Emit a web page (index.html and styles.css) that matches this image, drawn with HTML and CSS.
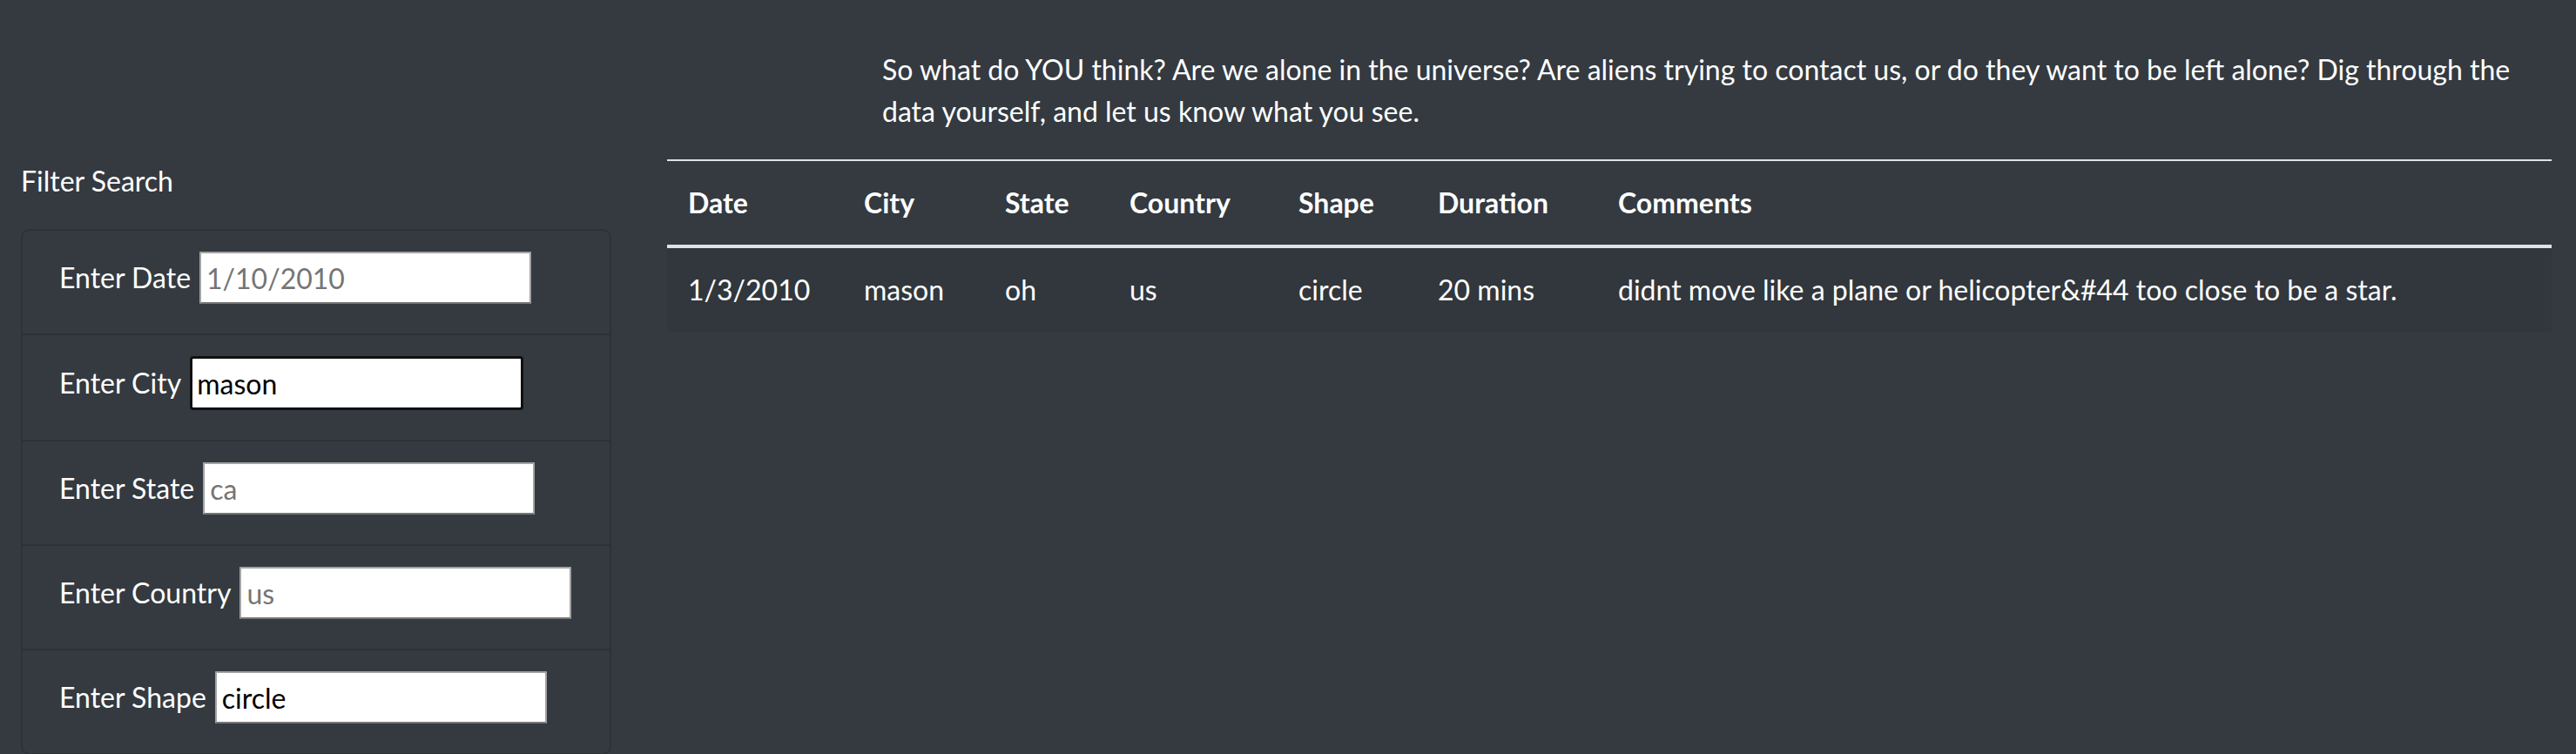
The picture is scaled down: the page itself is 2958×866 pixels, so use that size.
FILE: index.html
```html
<!DOCTYPE html>
<html lang="en">
<head>
<meta charset="utf-8">
<title>UFO Sightings</title>
<link rel="stylesheet" href="styles.css">
</head>
<body>
  <div class="intro">
    <p class="intro-text">So what do YOU think? Are we alone in the universe? Are aliens trying to contact us, or do they want to be left alone? Dig through the data yourself, and let us know what you see.</p>
  </div>
  <div class="main">
    <aside class="filters">
      <h5 class="filter-title">Filter Search</h5>
      <ul class="filter-card">
        <li class="filter-item"><label class="filter-label" for="datetime">Enter Date</label><input class="filter-input" id="datetime" type="text" placeholder="1/10/2010"></li>
        <li class="filter-item"><label class="filter-label" for="city">Enter City</label><input class="filter-input is-focused" id="city" type="text" value="mason"></li>
        <li class="filter-item"><label class="filter-label" for="state">Enter State</label><input class="filter-input" id="state" type="text" placeholder="ca"></li>
        <li class="filter-item"><label class="filter-label" for="country">Enter Country</label><input class="filter-input" id="country" type="text" placeholder="us"></li>
        <li class="filter-item"><label class="filter-label" for="shape">Enter Shape</label><input class="filter-input" id="shape" type="text" value="circle"></li>
      </ul>
    </aside>
    <section class="results">
      <table class="ufo-table">
        <colgroup>
          <col class="col-date"><col class="col-city"><col class="col-state"><col class="col-country"><col class="col-shape"><col class="col-duration"><col class="col-comments">
        </colgroup>
        <thead>
          <tr>
            <th>Date</th><th>City</th><th>State</th><th>Country</th><th>Shape</th><th>Duration</th><th>Comments</th>
          </tr>
        </thead>
        <tbody>
          <tr class="striped">
            <td>1/3/2010</td><td>mason</td><td>oh</td><td>us</td><td>circle</td><td>20 mins</td><td>didnt move like a plane or helicopter&amp;#44 too close to be a star.</td>
          </tr>
        </tbody>
      </table>
    </section>
  </div>
</body>
</html>
```
FILE: styles.css
```css
html, body {
  margin: 0;
  padding: 0;
}

body {
  background: #343a40;
  color: #ffffff;
  font-family: Lato, "Open Sans", "Liberation Sans", sans-serif;
  font-size: 32px;
  line-height: 48px;
  height: 866px;
  overflow: hidden;
}

.intro {
  padding: 56px 28px 0 1013px;
}

.intro-text {
  margin: 0 0 31px 0;
}

.main {
  display: grid;
  grid-template-columns: 740px 1fr;
}

.filters {
  padding: 0 38px 0 24px;
}

.filter-title {
  margin: 1px 0 31px 0;
  font-size: 32px;
  font-weight: 400;
  line-height: 48px;
}

.filter-card {
  list-style: none;
  margin: 0;
  padding: 0;
  border: 2px solid #2d3237;
  border-radius: 10px;
}

.filter-item {
  display: flex;
  align-items: center;
  gap: 10px;
  padding: 24px 42px 34px 42px;
  border-bottom: 2px solid #2d3237;
}

.filter-item:last-child {
  border-bottom: none;
}

.filter-label {
  white-space: nowrap;
}

.filter-input {
  box-sizing: border-box;
  width: 381px;
  height: 60px;
  padding: 0 6px;
  margin: 0;
  border: 2px solid #a3a3a3;
  border-bottom-color: #767676;
  border-radius: 1px;
  background: #ffffff;
  color: #000000;
  font-family: Lato, "Open Sans", "Liberation Sans", sans-serif;
  font-size: 32px;
  outline: none;
}

.filter-input::placeholder {
  color: #757575;
}

.filter-input.is-focused {
  border: 3px solid #101010;
  border-radius: 4px;
  height: 62px;
  width: 383px;
  padding: 0 5px;
}

.results {
  padding: 0 28px 0 26px;
}

.ufo-table {
  width: 100%;
  table-layout: fixed;
  border-collapse: collapse;
  color: #ffffff;
}

.col-date { width: 202px; }
.col-city { width: 162px; }
.col-state { width: 143px; }
.col-country { width: 194px; }
.col-shape { width: 160px; }
.col-duration { width: 207px; }
.col-comments { width: auto; }

.ufo-table th {
  text-align: left;
  font-weight: 700;
  padding: 24px;
  border-top: 2px solid #dee2e6;
  border-bottom: 4px solid #dee2e6;
  white-space: nowrap;
}

.ufo-table td {
  padding: 24px;
  white-space: nowrap;
}

.striped {
  background: rgba(0, 0, 0, 0.05);
}
```
